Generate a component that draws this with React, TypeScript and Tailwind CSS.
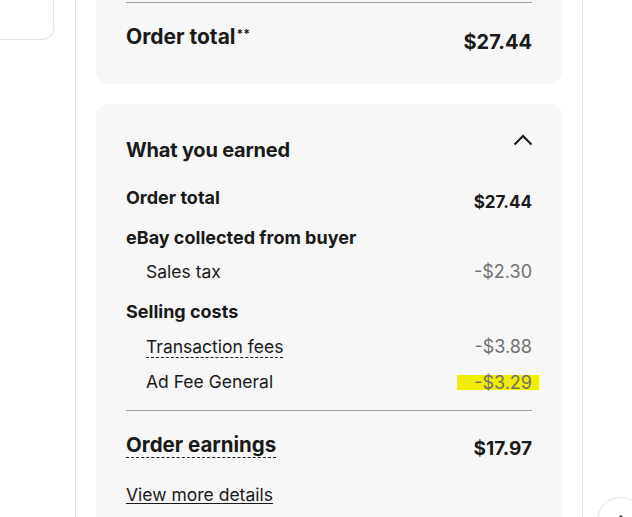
import { ArrowUp } from "lucide-react"

const FONT = { fontFamily: "Inter, 'Liberation Sans', sans-serif" }

function ChevronUp() {
  return (
    <svg width="20" height="12" viewBox="0 0 20 12" fill="none" aria-hidden="true">
      <path d="M1.5 10.5 L10 2 L18.5 10.5" stroke="#191919" strokeWidth="2.2" />
    </svg>
  )
}

function Row({
  label,
  value,
  indent,
  bold,
  dotted,
  className,
}: {
  label: string
  value?: string
  indent?: boolean
  bold?: boolean
  dotted?: boolean
  className?: string
}) {
  return (
    <div className={`flex items-start justify-between ${className ?? ""}`}>
      <span
        className={`leading-6 ${indent ? "pl-5" : ""} ${bold ? "text-[18px] font-bold" : "text-[17.5px] font-normal"}`}
      >
        <span className={dotted ? "border-b border-dashed border-[#191919]" : ""}>{label}</span>
      </span>
      {value && <span className="text-[18px] leading-6 text-[#707070]">{value}</span>}
    </div>
  )
}

export default function App() {
  return (
    <div className="relative h-[517px] w-[632px] overflow-hidden bg-white text-[#191919]" style={FONT}>
      <div className="flex h-full items-start">
        <div className="h-[40px] w-[54px] shrink-0 rounded-br-xl border-r border-b border-[#e5e5e5]" />
        <div className="ml-[21px] h-full w-[508px] shrink-0 border-x border-[#e5e5e5] px-5">
          <div className="rounded-b-xl bg-[#f7f7f7] px-[30px] pt-[2px] pb-[28px]">
            <div className="border-t border-[#a0a0a0]" />
            <div className="mt-5 flex items-start justify-between">
              <span className="text-[21px] font-bold leading-7">
                Order total<sup className="ml-px text-[12px]">**</sup>
              </span>
              <span className="mt-[5px] text-[20px] font-bold leading-7">$27.44</span>
            </div>
          </div>

          <div className="mt-5 rounded-t-xl bg-[#f7f7f7] px-[30px] pt-[32px] pb-10">
            <div className="flex items-start justify-between">
              <h2 className="text-[20px] font-bold leading-7 tracking-[-0.2px]">What you earned</h2>
              <div className="mr-[-1px] -mt-[2px]">
                <ChevronUp />
              </div>
            </div>

            <div className="mt-[22px] flex items-start justify-between">
              <span className="text-[18px] font-bold leading-6">Order total</span>
              <span className="mt-1 text-[17px] font-bold leading-6">$27.44</span>
            </div>
            <Row label="eBay collected from buyer" bold className="mt-3" />
            <Row label="Sales tax" value="-$2.30" indent className="mt-[10px]" />
            <Row label="Selling costs" bold className="mt-4" />
            <Row label="Transaction fees" value="-$3.88" indent dotted className="mt-[11px]" />
            <div className="mt-[11px] flex items-center justify-between">
              <span className="pl-5 text-[17.5px] leading-6">Ad Fee General</span>
              <span className="-mr-[7px] inline-block h-[15px] bg-[#f2ee00] pl-[17px] pr-[7px] text-[18px] leading-[15px] text-[#707070]">
                -$3.29
              </span>
            </div>

            <div className="mt-4 border-t border-[#a0a0a0]" />

            <div className="mt-5 flex items-start justify-between">
              <span className="text-[20.5px] font-bold leading-7">
                <span className="border-b border-dashed border-[#191919]">Order earnings</span>
              </span>
              <span className="mt-1 text-[19px] font-bold leading-7">$17.97</span>
            </div>

            <a href="#" className="mt-[20px] inline-block text-[17.5px] leading-6 underline underline-offset-2">
              View more details
            </a>
          </div>
        </div>
      </div>

      <button
        aria-label="Back to top"
        className="absolute left-[597px] top-[497px] flex h-12 w-12 items-center justify-center rounded-full border border-[#e5e5e5] bg-white shadow-sm"
      >
        <ArrowUp size={16} strokeWidth={2.5} />
      </button>
    </div>
  )
}
